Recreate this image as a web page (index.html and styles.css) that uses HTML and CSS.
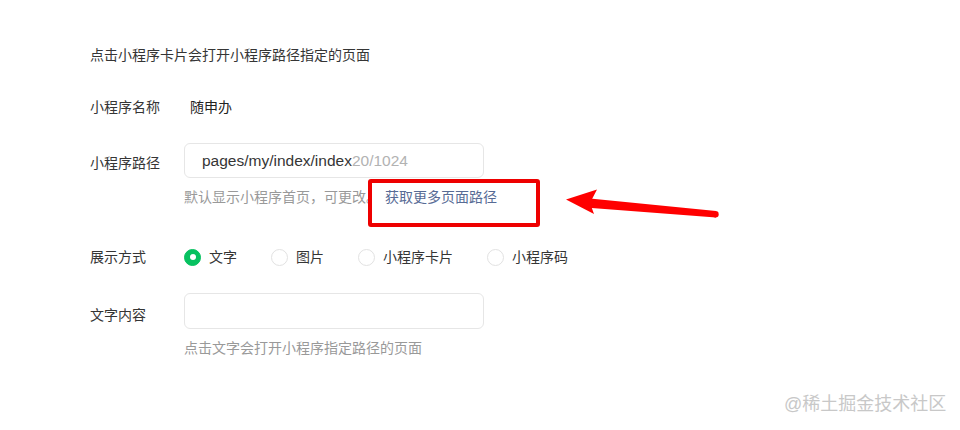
FILE: index.html
```html
<!DOCTYPE html>
<html lang="zh-CN">
<head>
<meta charset="utf-8">
<title>小程序设置</title>
<link rel="stylesheet" href="styles.css">
</head>
<body>
<div class="page">
  <p class="desc">点击小程序卡片会打开小程序路径指定的页面</p>

  <div class="row row-name">
    <span class="label">小程序名称</span>
    <span class="value">随申办</span>
  </div>

  <div class="row row-path">
    <span class="label label-path">小程序路径</span>
    <div class="field">
      <div class="input">
        <span class="input-text">pages/my/index/index</span><span class="counter">20/1024</span>
      </div>
      <p class="hint">默认显示小程序首页，可更改。<a class="link" href="#">获取更多页面路径</a></p>
    </div>
  </div>

  <div class="row row-display">
    <span class="label">展示方式</span>
    <div class="radios">
      <label class="radio-item"><span class="radio checked"></span><span>文字</span></label>
      <label class="radio-item"><span class="radio"></span><span>图片</span></label>
      <label class="radio-item"><span class="radio"></span><span>小程序卡片</span></label>
      <label class="radio-item"><span class="radio"></span><span>小程序码</span></label>
    </div>
  </div>

  <div class="row row-text">
    <span class="label label-text">文字内容</span>
    <div class="field">
      <div class="input input-tall"></div>
      <p class="hint">点击文字会打开小程序指定路径的页面</p>
    </div>
  </div>

  <div class="mark-box"></div>
  <svg class="mark-arrow" width="960" height="430" viewBox="0 0 960 430" aria-hidden="true">
    <polygon points="585,198 716,211 716,217.5 585,207.5" fill="#f00"/>
    <circle cx="715.5" cy="214.3" r="3.2" fill="#f00"/>
    <polygon points="566,199.5 597,189.5 590,203 594,214" fill="#f00"/>
  </svg>
  <div class="watermark">@稀土掘金技术社区</div>
</div>
</body>
</html>
```

FILE: styles.css
```css
html, body {
  margin: 0;
  padding: 0;
  background: #ffffff;
}

body {
  font-family: "Liberation Sans", "Noto Sans CJK SC", sans-serif;
  font-size: 14px;
  color: #353535;
}

.page {
  position: relative;
  width: 960px;
  height: 430px;
  box-sizing: border-box;
  padding: 45px 0 0 90px;
  overflow: hidden;
}

.desc {
  margin: 0;
  line-height: 20px;
  height: 20px;
}

.row {
  display: flex;
  align-items: flex-start;
  line-height: 20px;
}

.label {
  width: 94px;
  flex: none;
  color: #353535;
}

.row-name {
  margin-top: 32px;
}

.value {
  padding-left: 6px;
  color: #222;
}

.row-path {
  margin-top: 26px;
}

.label-path {
  padding-top: 10px;
}

.field {
  display: flex;
  flex-direction: column;
}

.input {
  width: 300px;
  height: 35px;
  box-sizing: border-box;
  border: 1px solid #e6e6e6;
  border-radius: 6px;
  padding-left: 17px;
  display: flex;
  align-items: center;
  font-size: 15.5px;
  background: #fff;
}

.input-tall {
  height: 36px;
}

.input-text {
  color: #353535;
}

.counter {
  color: #b2b2b2;
}

.hint {
  margin: 9px 0 0;
  line-height: 20px;
  color: #999;
}

.link {
  margin-left: 5px;
  color: #576b95;
  text-decoration: none;
}

.row-display {
  margin-top: 40px;
  align-items: center;
}

.radios {
  display: flex;
  align-items: center;
}

.radio-item {
  display: flex;
  align-items: center;
  gap: 8px;
  margin-right: 34px;
  color: #353535;
}

.radio {
  width: 17px;
  height: 17px;
  box-sizing: border-box;
  border-radius: 50%;
  border: 1px solid #e2e2e2;
  position: relative;
  flex: none;
}

.radio.checked {
  background: #07c160;
  border-color: #07c160;
}

.radio.checked::after {
  content: "";
  position: absolute;
  left: 50%;
  top: 50%;
  width: 6px;
  height: 6px;
  margin: -3px 0 0 -3px;
  border-radius: 50%;
  background: #fff;
}

.row-text {
  margin-top: 26px;
}

.label-text {
  padding-top: 12px;
}

.mark-box {
  position: absolute;
  left: 368px;
  top: 179px;
  width: 172px;
  height: 48px;
  box-sizing: border-box;
  border: 4px solid #ee0000;
  border-radius: 3px;
}

.mark-arrow {
  position: absolute;
  left: 0;
  top: 0;
}

.watermark {
  position: absolute;
  left: 784px;
  top: 393px;
  font-size: 18px;
  line-height: 22px;
  color: #c8c8c8;
  white-space: nowrap;
}
```
